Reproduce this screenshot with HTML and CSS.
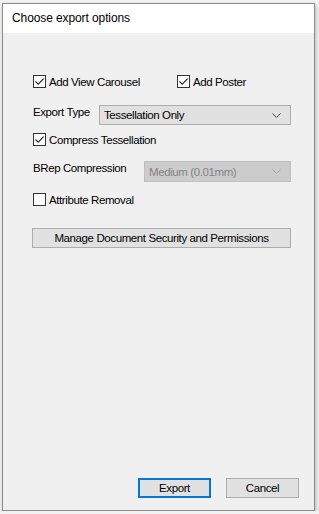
FILE: index.html
```html
<!DOCTYPE html>
<html>
<head>
<meta charset="utf-8">
<link rel="stylesheet" href="styles.css">
</head>
<body>
<div class="window">
  <div class="titlebar">Choose export options</div>
  <div class="content">
    <div class="row row-checks">
      <label class="check first">
        <span class="box"><svg viewBox="0 0 11 11" width="11" height="11"><path d="M1.5 5.5 L4.2 8.2 L9.6 2.6" fill="none" stroke="#222" stroke-width="1.1"/></svg></span>
        <span class="txt">Add View Carousel</span>
      </label>
      <label class="check">
        <span class="box"><svg viewBox="0 0 11 11" width="11" height="11"><path d="M1.5 5.5 L4.2 8.2 L9.6 2.6" fill="none" stroke="#222" stroke-width="1.1"/></svg></span>
        <span class="txt">Add Poster</span>
      </label>
    </div>
    <div class="row row-select">
      <span class="lbl lbl-export">Export Type</span>
      <div class="select">
        <span>Tessellation Only</span>
        <svg class="chev" viewBox="0 0 9 5" width="9" height="5"><path d="M0.5 0.5 L4.5 4.5 L8.5 0.5" fill="none" stroke="#444" stroke-width="1"/></svg>
      </div>
    </div>
    <label class="check row row-compress">
      <span class="box"><svg viewBox="0 0 11 11" width="11" height="11"><path d="M1.5 5.5 L4.2 8.2 L9.6 2.6" fill="none" stroke="#222" stroke-width="1.1"/></svg></span>
      <span class="txt">Compress Tessellation</span>
    </label>
    <div class="row row-brep">
      <span class="lbl lbl-brep">BRep Compression</span>
      <div class="select disabled">
        <span>Medium (0.01mm)</span>
        <svg class="chev" viewBox="0 0 9 5" width="9" height="5"><path d="M0.5 0.5 L4.5 4.5 L8.5 0.5" fill="none" stroke="#aaa" stroke-width="1"/></svg>
      </div>
    </div>
    <label class="check row row-attr">
      <span class="box"></span>
      <span class="txt">Attribute Removal</span>
    </label>
    <div class="btn manage">Manage Document Security and Permissions</div>
    <div class="footer">
      <div class="btn default">Export</div>
      <div class="btn">Cancel</div>
    </div>
  </div>
</div>
</body>
</html>
```
FILE: styles.css
```css
html, body {
  margin: 0;
  padding: 0;
}
body {
  background: #f2f2f2;
  padding: 3px 0 0 2px;
  font-family: "Liberation Sans", Arial, sans-serif;
  font-size: 11.5px;
  letter-spacing: -0.4px;
  color: #000;
}
.window {
  width: 311px;
  height: 506px;
  border: 1px solid #8c8c8c;
  background: #f0f0f0;
  box-shadow: 1px 2px 4px rgba(0,0,0,0.25);
  display: flex;
  flex-direction: column;
}
.titlebar {
  height: 29px;
  background: #fff;
  font-size: 12px;
  letter-spacing: -0.1px;
  line-height: 29px;
  padding-left: 9px;
  color: #000;
}
.content {
  flex: 1;
  display: flex;
  flex-direction: column;
  padding: 0 23px 12px 29px;
}
.row {
  display: flex;
  align-items: center;
}
.check {
  display: flex;
  align-items: center;
  height: 13px;
  margin-left: 1px;
}
.row-checks .check {
  margin-left: 0;
}
.row-checks {
  margin-top: 42px;
  height: 13px;
  padding-left: 1px;
}
.check.first {
  width: 144px;
}
.box {
  width: 11px;
  height: 11px;
  border: 1px solid #333;
  background: #fff;
  display: flex;
  flex: none;
}
.txt {
  margin-left: 3px;
  white-space: nowrap;
}
.row-select {
  margin-top: 17px;
  height: 20px;
  padding-left: 1px;
}
.lbl {
  flex: none;
  white-space: nowrap;
  align-self: flex-start;
  margin-top: 1px;
}
.lbl-export { width: 66px; }
.lbl-brep { width: 111px; }
.select {
  flex: 1;
  height: 18px;
  border: 1px solid #adadad;
  background: #e1e1e1;
  display: flex;
  align-items: center;
  justify-content: space-between;
  padding: 0 9px 0 4px;
}
.select.disabled {
  background: #cccccc;
  border-color: #bfbfbf;
  color: #838383;
  height: 19px;
}
.chev { flex: none; }
.row-compress {
  margin-top: 8px;
}
.row-brep {
  margin-top: 15px;
  height: 21px;
  padding-left: 1px;
}
.row-attr {
  margin-top: 11px;
}
.btn {
  height: 18px;
  border: 1px solid #adadad;
  background: #e1e1e1;
  display: flex;
  align-items: center;
  justify-content: center;
  white-space: nowrap;
}
.manage {
  margin-top: 22px;
}
.footer {
  margin-top: auto;
  display: flex;
  justify-content: flex-end;
  gap: 15px;
  margin-right: -8px;
}
.footer .btn {
  width: 71px;
}
.footer .btn.default {
  border: 2px solid #0078d7;
  height: 16px;
  width: 69px;
}
```
